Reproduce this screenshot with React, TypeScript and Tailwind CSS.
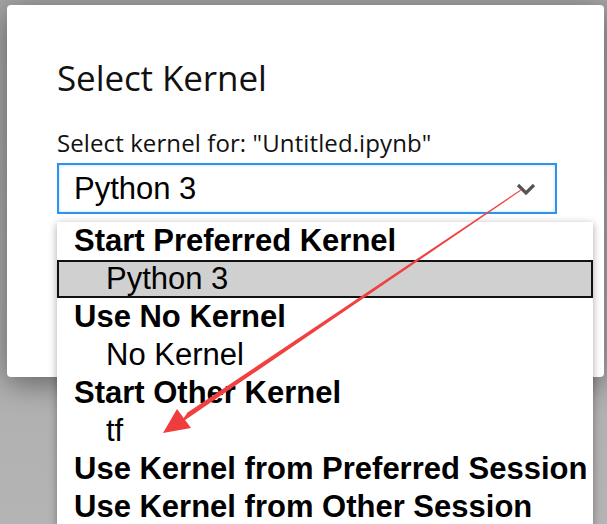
const sections: Array<{ heading: string; options: string[] }> = [
  { heading: "Start Preferred Kernel", options: ["Python 3"] },
  { heading: "Use No Kernel", options: ["No Kernel"] },
  { heading: "Start Other Kernel", options: ["tf"] },
  { heading: "Use Kernel from Preferred Session", options: [] },
  { heading: "Use Kernel from Other Session", options: [] },
];

const selected = "Python 3";

function Chevron() {
  return (
    <svg width="22" height="14" viewBox="0 0 22 14" className="shrink-0">
      <polyline
        points="3,3 11,11 19,3"
        fill="none"
        stroke="#555"
        strokeWidth="3.2"
      />
    </svg>
  );
}

function RedArrow() {
  // annotation drawn on top of the screenshot
  return (
    <svg
      width="607"
      height="524"
      viewBox="0 0 607 524"
      className="pointer-events-none absolute left-0 top-0"
    >
      <polygon
        points="521.5,189 520.5,191 180,423.5 187.5,412.5"
        fill="#f04040"
      />
      <polygon points="163,433 177,409 191,428" fill="#f03c3c" />
    </svg>
  );
}

export default function App() {
  return (
    <div className="relative h-[524px] w-[607px] overflow-hidden bg-gradient-to-b from-[#a6a6a6] to-[#b4b4b4] font-['Liberation_Sans',Arial,sans-serif]">
      <div className="ml-[7px] mt-[5px] h-[372px] w-[597px] rounded-[4px] bg-white pl-[50px] pt-[55px] shadow-[0_6px_30px_rgba(0,0,0,0.45)]">
        <h1 className="font-['Open_Sans',sans-serif] text-[35px] leading-[36px] font-normal tracking-[-0.1px] text-[#111]">
          Select Kernel
        </h1>
        <div className="mt-[35px] font-['Open_Sans',sans-serif] text-[24px] leading-[24px] tracking-[0.1px] text-[#111]">
          Select kernel for: "Untitled.ipynb"
        </div>
        <div className="mt-[8px] flex h-[51px] w-[500px] items-center justify-between border-2 border-[#2e93ee] pl-[15px] pr-[18px] shadow-[inset_0_0_3px_rgba(46,147,238,0.35)]">
          <span className="text-[31px] leading-[38px] text-black">Python 3</span>
          <Chevron />
        </div>
      </div>

      <div className="absolute left-[57px] top-[222px] w-[536px] bg-white shadow-[0_2px_8px_rgba(0,0,0,0.35)]">
        {sections.map((section) => (
          <div key={section.heading}>
            <div className="pl-[17px] text-[31px] font-bold leading-[38px] whitespace-nowrap text-black">
              {section.heading}
            </div>
            {section.options.map((opt) =>
              opt === selected ? (
                <div
                  key={opt}
                  className="border-2 border-[#111] bg-[#d0d0d0] pl-[47px] text-[31px] leading-[34px] text-black"
                >
                  {opt}
                </div>
              ) : (
                <div
                  key={opt}
                  className="pl-[49px] text-[31px] leading-[38px] text-black"
                >
                  {opt}
                </div>
              )
            )}
          </div>
        ))}
      </div>

      <RedArrow />
    </div>
  );
}
